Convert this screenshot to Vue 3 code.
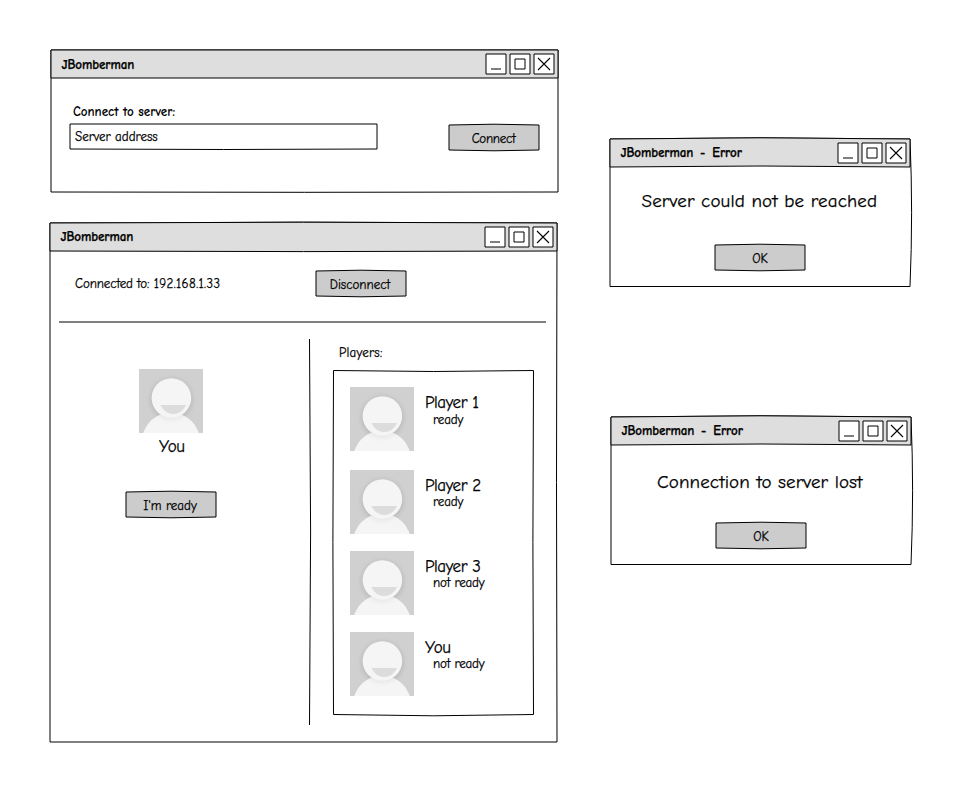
<script setup>
import { h } from 'vue'

// Hand-drawn rectangle; bow = outward bulge of the [top, right, bottom, left] edge in px
function SketchBox({ w, h: ht, fill = 'none', bow = [0, 0, 0, 0], shift = 0 }) {
  const [t, r, b, l] = bow.map((v) => v * 2)
  const d =
    `M0 0Q${w / 2} ${-t} ${w} 0` +
    `Q${w + r} ${ht / 2} ${w} ${ht}` +
    `Q${w / 2} ${ht + b} 0 ${ht}` +
    `Q${-l} ${ht / 2} 0 0Z`
  return h('svg', { width: w, height: ht, 'aria-hidden': 'true' }, [
    h('path', {
      d,
      fill,
      stroke: '#000',
      'stroke-width': 1,
      'stroke-linejoin': 'round',
      transform: `translate(${shift} ${shift})`,
    }),
  ])
}
SketchBox.props = ['w', 'h', 'fill', 'bow', 'shift']

const buttonBow = [0.8, 0, 0.8, 0]

const errors = [
  { id: 'unreachable', text: 'Server could not be reached' },
  { id: 'lost', text: 'Connection to server lost' },
]

const players = [
  { id: 'p1', name: 'Player 1', status: 'ready' },
  { id: 'p2', name: 'Player 2', status: 'ready' },
  { id: 'p3', name: 'Player 3', status: 'not ready' },
  { id: 'me', name: 'You', status: 'not ready' },
]
</script>

<template>
  <div class="page">
    <svg class="defs" width="0" height="0" aria-hidden="true">
      <defs>
        <filter id="soft" x="-40%" y="-40%" width="180%" height="180%">
          <feGaussianBlur stdDeviation="3" />
        </filter>
        <symbol id="controls" viewBox="0 0 70 22">
          <g fill="#fff" stroke="#000" stroke-width="1" stroke-linejoin="round">
            <rect x="1" y="1" width="20" height="20" />
            <rect x="25" y="1" width="20" height="20" />
            <rect x="49" y="1" width="20" height="20" />
            <path d="M6 16H16" />
            <rect x="30" y="6" width="10" height="10" />
            <path d="M53 5L65 17M65 5L53 17" stroke-width="1.1" />
          </g>
        </symbol>
        <symbol id="avatar" viewBox="0 0 64 64">
          <rect width="64" height="64" fill="#d0d0d0" />
          <circle cx="32.4" cy="30" r="20" fill="#000" opacity=".08" filter="url(#soft)" />
          <circle cx="32" cy="72.5" r="29" fill="#f5f5f5" />
          <circle cx="32.4" cy="31" r="19" fill="#000" opacity=".08" filter="url(#soft)" />
          <circle cx="32.4" cy="29" r="19.8" fill="#f5f5f5" />
          <path d="M21.3 36H47.2Q42.5 45 34.2 45Q26 45 21.3 36Z" fill="#dcdcdc" />
        </symbol>
      </defs>
    </svg>

    <div class="column">
      <section class="window connect">
        <SketchBox class="sketch" :w="507" :h="142" fill="#fff" :bow="[0, 0, 0.3, 0]" />
        <header class="bar">
          <SketchBox class="sketch" :w="507" :h="28" fill="#dedede" />
          <h2 class="title">JBomberman</h2>
          <svg class="controls" width="70" height="22"><use href="#controls" /></svg>
        </header>
        <label class="label">Connect to server:</label>
        <div class="connect-row">
          <div class="input">
            <SketchBox class="sketch" :w="307" :h="25" fill="#fff" :bow="[0, 0, 0.5, 0]" />
            <span class="placeholder">Server address</span>
          </div>
          <button class="button tight">
            <SketchBox class="sketch" :w="90" :h="25" fill="#ccc" :bow="buttonBow" />
            <span>Connect</span>
          </button>
        </div>
      </section>

      <section class="window lobby">
        <SketchBox class="sketch" :w="507" :h="519" fill="#fff" :bow="[0.8, -0.5, 0, 0]" />
        <header class="bar">
          <SketchBox class="sketch" :w="507" :h="28" fill="#dedede" :bow="[0.8, 0, 0.6, 0]" />
          <h2 class="title">JBomberman</h2>
          <svg class="controls" width="70" height="22"><use href="#controls" /></svg>
        </header>
        <div class="status-row">
          <span class="address">Connected to: <span class="ip">192.168.1.33</span></span>
          <button class="button wide">
            <SketchBox class="sketch" :w="90" :h="25" fill="#ccc" :bow="buttonBow" />
            <span>Disconnect</span>
          </button>
        </div>
        <svg class="rule" width="487" height="2"><path d="M0 1H487" stroke="#000" stroke-width="1" /></svg>
        <div class="lobby-body">
          <div class="self">
            <svg class="avatar" width="64" height="64"><use href="#avatar" /></svg>
            <span class="name">You</span>
            <button class="button wide">
              <SketchBox class="sketch" :w="90" :h="25" fill="#ccc" :bow="buttonBow" />
              <span>I'm ready</span>
            </button>
          </div>
          <svg class="divider" width="4" height="386">
            <path d="M1.5 0Q3.7 193 1.5 386" fill="none" stroke="#000" stroke-width="1" />
          </svg>
          <div class="players">
            <span class="players-label">Players:</span>
            <div class="list-frame">
              <SketchBox class="sketch" :w="200" :h="344" fill="#fff" :bow="[-1, -0.6, 1.3, 0.6]" :shift="0.5" />
              <ul class="list">
                <li v-for="p in players" :key="p.id" class="player">
                  <svg class="avatar" width="64" height="64"><use href="#avatar" /></svg>
                  <div class="info">
                    <span class="name">{{ p.name }}</span>
                    <span class="state">{{ p.status }}</span>
                  </div>
                </li>
              </ul>
            </div>
          </div>
        </div>
      </section>
    </div>

    <div class="column errors">
      <section v-for="e in errors" :key="e.id" class="window error" :class="e.id">
        <SketchBox class="sketch" :w="300" :h="147.5" fill="#fff" :bow="[1.2, 1.6, 0, 0]" />
        <header class="bar">
          <SketchBox class="sketch" :w="300" :h="28" fill="#dedede" :bow="[1.2, 0, -1, 0]" />
          <h2 class="title">JBomberman - Error</h2>
          <svg class="controls" width="70" height="22"><use href="#controls" /></svg>
        </header>
        <p class="message">{{ e.text }}</p>
        <button class="button">
          <SketchBox class="sketch" :w="90" :h="25" fill="#ccc" :bow="buttonBow" />
          <span>OK</span>
        </button>
      </section>
    </div>
  </div>
</template>

<style>
body {
  margin: 0;
  background: #fff;
}
</style>

<style scoped>
.page {
  box-sizing: border-box;
  width: 962px;
  height: 792px;
  padding: 50px 0 0 50px;
  display: flex;
  gap: 52px;
  overflow: hidden;
  background: #fff;
  color: #000;
  font: 13px/16px "Comic Sans MS", "Comic Neue", "Open Sans", sans-serif;
  -webkit-text-stroke: 0.25px #000;
  white-space: nowrap;
}
.defs {
  position: absolute;
}
.column {
  width: 508px;
  display: flex;
  flex-direction: column;
  gap: 31px;
}
.errors {
  width: 302px;
  padding-top: 89px;
  gap: 130px;
}
.window {
  position: relative;
  isolation: isolate;
  display: flex;
  flex-direction: column;
}
.sketch {
  position: absolute;
  left: 0;
  top: 0;
  z-index: -1;
  overflow: visible;
}
.bar {
  position: relative;
  isolation: isolate;
  height: 28px;
  flex: none;
  box-sizing: border-box;
  padding: 0 3px 0 10.5px;
  display: flex;
  align-items: center;
  justify-content: space-between;
}
.title {
  margin: 0;
  font-size: 13px;
  line-height: 16px;
  font-weight: 700;
  letter-spacing: -0.1px;
  word-spacing: 2.5px;
}
.connect .title {
  padding-top: 1px;
}
.connect {
  width: 507px;
  height: 142px;
  margin-left: 1px;
}
.label {
  margin: 26px 0 0 22px;
  font-weight: 600;
  -webkit-text-stroke-width: 0;
}
.connect-row {
  display: flex;
  gap: 72px;
  margin: 4px 0 0 19px;
}
.input {
  position: relative;
  isolation: isolate;
  box-sizing: border-box;
  width: 307px;
  height: 25px;
  padding: 5px 0 0 5px;
}
.button {
  position: relative;
  isolation: isolate;
  box-sizing: border-box;
  width: 90px;
  height: 25px;
  flex: none;
  padding: 6px 0 0;
  border: 0;
  background: none;
  color: inherit;
  font: inherit;
  text-align: center;
  display: flex;
  justify-content: center;
  align-items: flex-start;
}
.connect .button {
  margin-top: 1px;
}
.tight {
  letter-spacing: -0.3px;
  padding-right: 1px;
}
.wide {
  padding-right: 2px;
}
.lobby {
  width: 507px;
  height: 519px;
}
.status-row {
  display: flex;
  padding: 20px 0 0 25px;
}
.address {
  width: 241px;
  padding-top: 5px;
  letter-spacing: -0.1px;
}
.ip {
  font-kerning: none;
  letter-spacing: 0.4px;
}
.rule {
  display: block;
  margin: 25px 0 0 9px;
}
.lobby-body {
  display: flex;
  padding-top: 16px;
}
.self {
  width: 258px;
  padding-top: 30px;
  display: flex;
  flex-direction: column;
  align-items: flex-start;
}
.avatar {
  display: block;
  flex: none;
}
.self .avatar {
  margin-left: 89px;
}
.name {
  font-size: 17px;
  line-height: 18px;
  letter-spacing: -0.45px;
}
.self .name {
  margin: 5px 0 0 109px;
}
.self .button {
  margin: 36px 0 0 76px;
}
.divider {
  display: block;
  flex: none;
  overflow: visible;
}
.players {
  padding-left: 21px;
  display: flex;
  flex-direction: column;
}
.players-label {
  margin: 6px 0 0 6px;
  letter-spacing: 0.2px;
}
.list-frame {
  position: relative;
  isolation: isolate;
  width: 201px;
  height: 345px;
  margin-top: 9px;
}
.list {
  margin: 0;
  padding: 17px 0 0 17px;
  list-style: none;
  display: flex;
  flex-direction: column;
  gap: 17px;
}
.player {
  display: flex;
  gap: 11px;
}
.player:first-child {
  margin-bottom: 2px;
}
.info {
  padding-top: 7px;
  display: flex;
  flex-direction: column;
}
.state {
  margin-left: 8px;
  line-height: 14px;
  letter-spacing: -0.15px;
}
.player:first-child .state {
  margin-top: 1px;
}
.error {
  width: 300px;
  height: 148px;
}
.lost {
  margin-left: 1px;
}
.message {
  margin: 22px 0 0 31.5px;
  font-size: 19px;
  line-height: 24px;
  letter-spacing: 0.15px;
}
.error .button {
  margin: 32px 0 0 105px;
}
.lost .message {
  margin: 25px 0 0 46px;
  letter-spacing: 0.12px;
}
.lost .button {
  margin-top: 29px;
}
</style>
